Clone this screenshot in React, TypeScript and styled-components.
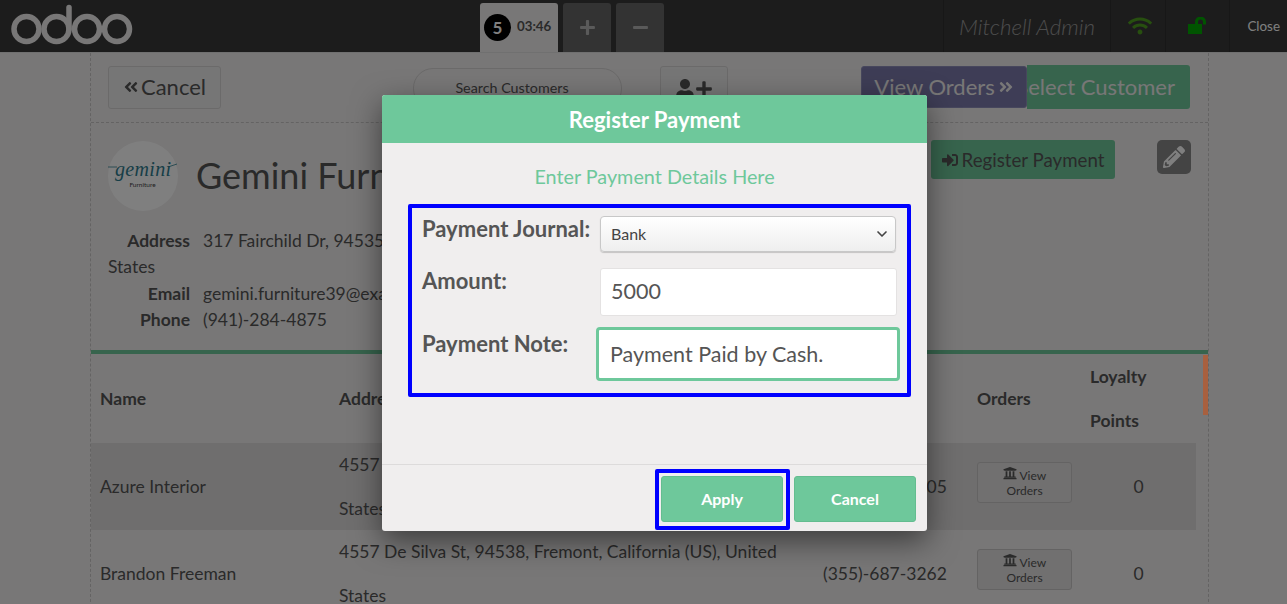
import React from "react";
import styled, { createGlobalStyle } from "styled-components";
import { FaAngleDoubleLeft, FaAngleDoubleRight, FaUser, FaSignInAlt, FaPencilAlt, FaUniversity, FaWifi, FaPlus, FaMinus } from "react-icons/fa";
import { ChevronDown } from "lucide-react";

const Global = createGlobalStyle`
  html, body { margin: 0; padding: 0; height: 604px; overflow: hidden; background: #f0eeee; }
  body { font-family: Lato, "Open Sans", sans-serif; color: #555; }
  * { box-sizing: border-box; }
`;

const Page = styled.div`
  position: relative;
  width: 1287px;
  height: 604px;
  overflow: hidden;
`;

const Header = styled.header`
  display: flex;
  height: 53px;
  background: #393939;
  border-bottom: 1px solid #e0e0e0;
`;

const Logo = styled.svg`
  width: 143px;
  height: 52px;
  flex: none;
`;

const Tabs = styled.div`
  display: flex;
  align-items: flex-end;
  gap: 5px;
  margin-left: 337px;
  height: 52px;
`;

const OrderTab = styled.div`
  display: flex;
  align-items: center;
  width: 78px;
  height: 49px;
  padding-left: 4px;
  gap: 6px;
  background: #f0eeee;
  border-radius: 3px 3px 0 0;
`;

const Time = styled.span`
  margin-bottom: 4px;
  font-size: 13.3px;
  font-weight: 700;
  color: #555;
`;

const Count = styled.span`
  display: flex;
  align-items: center;
  justify-content: center;
  width: 27px;
  height: 27px;
  margin-top: -1px;
  border-radius: 50%;
  background: #000;
  color: #fff;
  font-size: 17px;
  font-weight: 700;
`;

const TabButton = styled.div`
  display: flex;
  align-items: center;
  justify-content: center;
  width: 48px;
  height: 49px;
  background: #666;
  border-radius: 3px 3px 0 0;
  color: #b4b4b4;
  font-size: 17px;
`;

const Status = styled.div`
  display: flex;
  margin-left: auto;
  height: 52px;
`;

const StatusCell = styled.div<{ $w: number }>`
  display: flex;
  align-items: center;
  justify-content: center;
  width: ${(p) => p.$w}px;
  border-left: 1px solid #2f2f2f;
`;

const User = styled(StatusCell)`
  font-size: 22.4px;
  font-style: italic;
  font-weight: 300;
  color: #999;
`;

const WifiCell = styled(StatusCell)`
  padding: 0 0 0 3px;
`;

const LockIcon = styled.svg`
  width: 20px;
  height: 17px;
  margin: 0 0 1px 0;
`;

const Close = styled(StatusCell)`
  font-size: 13.4px;
  color: #fff;
  justify-content: flex-end;
  padding-right: 7px;
`;

const Screen = styled.main`
  position: relative;
  width: 1119px;
  margin-left: 90px;
  border-left: 1px dashed #c9c7c7;
  border-right: 1px dashed #c9c7c7;
`;

const TopBar = styled.div`
  display: flex;
  align-items: flex-start;
  height: 70px;
  padding: 13px 0 0 17px;
  border-bottom: 1px dashed #c9c7c7;
`;

const GhostButton = styled.div`
  display: flex;
  align-items: center;
  justify-content: center;
  gap: 2px;
  height: 43px;
  padding-bottom: 2px;
  background: #ececec;
  border: 1px solid #d6d4d4;
  border-radius: 3px;
  font-size: 22px;
  color: #555;
`;

const CancelBack = styled(GhostButton)`
  width: 113px;
`;

const Search = styled.div`
  width: 209px;
  height: 41px;
  margin: 2px 0 0 192px;
  padding: 10px 11px 0 0;
  text-align: center;
  font-size: 14.3px;
  color: #555;
  background: #f0eeee;
  border: 1px solid #d6d4d4;
  border-radius: 20px;
`;

const AddButton = styled(GhostButton)`
  width: 68px;
  margin-left: 38px;
  gap: 0;
  padding-top: 4px;
`;

const ActionGroup = styled.div`
  display: flex;
  width: 329px;
  margin: -1px 0 0 133px;
  align-items: flex-start;
`;

const SelectCustomer = styled.div`
  display: flex;
  justify-content: flex-end;
  flex: none;
  width: 163px;
  height: 44px;
  padding-right: 15px;
  overflow: hidden;
  background: #6ec89b;
  border-radius: 0 3px 3px 0;
  font-size: 22px;
  line-height: 43px;
  white-space: nowrap;
  color: #f0eeee;
`;

const ViewOrders = styled.div`
  display: flex;
  align-items: center;
  justify-content: center;
  flex: none;
  gap: 3px;
  width: 166px;
  height: 42px;
  margin-top: 1px;
  padding-bottom: 1px;
  background: #7c7bad;
  border: 1px solid #8f8eba;
  border-radius: 3px;
  font-size: 22px;
  color: #f0eeee;
`;

const Details = styled.section`
  height: 227px;
  padding: 18px 17px 0;
`;

const DetailsTop = styled.div`
  display: flex;
  align-items: flex-start;
`;

const Avatar = styled.svg`
  width: 70px;
  height: 70px;
  flex: none;
`;

const Name = styled.h1`
  margin: 0 0 0 18px;
  font-size: 36px;
  font-weight: 400;
  line-height: 69px;
  color: #555;
  width: 735px;
  flex: none;
  white-space: nowrap;
`;

const RegisterButton = styled.div`
  display: flex;
  align-items: center;
  justify-content: center;
  gap: 4px;
  width: 184px;
  height: 39px;
  margin-top: -1px;
  padding-top: 1px;
  background: #6ec89b;
  border-radius: 3px;
  font-size: 18.7px;
  color: #555;
`;

const EditButton = styled.div`
  display: flex;
  align-items: center;
  justify-content: center;
  width: 34px;
  height: 34px;
  margin: -1px 0 0 42px;
  background: #888;
  border-radius: 5px;
  color: #fff;
  font-size: 22px;
`;

const Info = styled.div`
  width: 565px;
  margin-top: 17px;
  font-size: 17.5px;
  line-height: 26.4px;
  color: #555;
`;

const InfoLabel = styled.b`
  display: inline-block;
  width: 82px;
  margin-right: 13px;
  text-align: right;
  font-weight: 700;
`;

const TableWrap = styled.div`
  border-top: 4px solid #6ec89b;
`;

const Thumb = styled.div`
  position: absolute;
  z-index: 2;
  right: 79px;
  top: 355px;
  width: 5px;
  height: 60px;
  background: #a8603f;
`;

const Table = styled.table`
  width: 1105px;
  table-layout: fixed;
  border-collapse: collapse;
  font-size: 17.5px;
  line-height: 43.5px;
  color: #555;
`;

const Th = styled.th`
  padding: 1px 9px 0;
  height: 89px;
  line-height: 44px;
  text-align: left;
  font-weight: 700;
`;

const Row = styled.tr<{ $shaded?: boolean }>`
  height: 87px;
  background: ${(p) => (p.$shaded ? "#dedcdc" : "transparent")};
`;

const Td = styled.td<{ $center?: boolean }>`
  padding: 0 9px;
  text-align: ${(p) => (p.$center ? "center" : "left")};
`;

const OrdersButton = styled.div`
  width: 95px;
  height: 41px;
  margin-bottom: 8px;
  padding-top: 3px;
  border: 1px solid #c9c7c7;
  border-radius: 3px;
  background: #e2e0e0;
  text-align: center;
  font-size: 12px;
  line-height: 15px;
`;

const Overlay = styled.div`
  position: absolute;
  inset: 0;
  background: rgba(0, 0, 0, 0.5);
`;

const Modal = styled.div`
  position: absolute;
  left: 382px;
  top: 95px;
  width: 545px;
  height: 436px;
  display: flex;
  flex-direction: column;
  background: #f0eeee;
  border-radius: 3px;
  box-shadow: 0 10px 30px rgba(0, 0, 0, 0.5);
  overflow: hidden;
`;

const ModalTitle = styled.div`
  height: 48px;
  flex: none;
  padding-top: 1px;
  background: #6ec89b;
  color: #fff;
  font-size: 22px;
  font-weight: 700;
  line-height: 47px;
  text-align: center;
`;

const ModalBody = styled.div`
  flex: 1;
  padding: 20px 16px 0 26px;
`;

const Lead = styled.div`
  height: 41px;
  margin: 0 -16px 0 -26px;
  font-size: 19.8px;
  line-height: 26px;
  text-align: center;
  color: #6ec89b;
`;

const HighlightBox = styled.div`
  width: 503px;
  height: 193px;
  padding: 8px 0 0 10px;
  border: 4px solid #0000ff;
  border-radius: 2px;
`;

const FormRow = styled.div<{ $gap: number }>`
  display: flex;
  align-items: flex-start;
  margin-bottom: ${(p) => p.$gap}px;
`;

const Label = styled.label<{ $top?: number }>`
  width: 178px;
  flex: none;
  padding-top: ${(p) => p.$top ?? 0}px;
  font-size: 22px;
  font-weight: 700;
  line-height: 25px;
  color: #555;
  white-space: nowrap;
`;

const SelectWrap = styled.div`
  position: relative;
  width: 296px;
  height: 36px;
`;

const Select = styled.select`
  appearance: none;
  width: 100%;
  height: 100%;
  padding: 0 0 2px 10px;
  font-family: Lato, sans-serif;
  font-size: 16px;
  color: #444;
  background: linear-gradient(#ffffff, #eeeeee);
  border: 1px solid #c8c8c8;
  border-radius: 4px;
  box-shadow: 0 1px 1px rgba(0, 0, 0, 0.18);
`;

const Caret = styled.span`
  position: absolute;
  right: 6px;
  top: 10px;
  display: flex;
  pointer-events: none;
  color: #444;
`;

const TextInput = styled.input<{ $active?: boolean }>`
  height: ${(p) => (p.$active ? 54 : 48)}px;
  width: ${(p) => (p.$active ? 304 : 297)}px;
  margin-left: ${(p) => (p.$active ? -4 : 0)}px;
  padding: 0 0 ${(p) => (p.$active ? 0 : 2)}px ${(p) => (p.$active ? 11 : 10)}px;
  font-family: Lato, sans-serif;
  font-size: 21.5px;
  color: #555;
  background: #fff;
  border: ${(p) => (p.$active ? "3px solid #6ec89b" : "1px solid #e4e2e2")};
  border-radius: ${(p) => (p.$active ? 4 : 3)}px;
  outline: none;
`;

const Footer = styled.div`
  display: flex;
  justify-content: flex-end;
  align-items: flex-start;
  flex: none;
  height: 67px;
  padding: 4px 11px 0 0;
  border-top: 1px solid #dddbdb;
`;

const ApplyFrame = styled.div`
  padding: 3px 3px 4px 2px;
  margin-right: 4px;
  border: 4px solid #0000ff;
  border-radius: 2px;
`;

const ModalButton = styled.div<{ $plain?: boolean }>`
  width: 122px;
  height: 46px;
  margin-top: ${(p) => (p.$plain ? 7 : 0)}px;
  background: #6ec89b;
  border: 1px solid #64bd90;
  border-radius: 3px;
  color: #fff;
  font-size: 16px;
  font-weight: 700;
  line-height: 44px;
  text-align: center;
`;

const customers = [
  { name: "Azure Interior", address: "4557 De Silva St, 94538, Fremont, California (US), United States", phone: "(870)-931-0505", shaded: true },
  { name: "Brandon Freeman", address: "4557 De Silva St, 94538, Fremont, California (US), United States", phone: "(355)-687-3262", shaded: false },
];

export default function App() {
  return (
    <Page>
      <Global />
      <Header>
        <Logo viewBox="0 0 143 52">
          <g fill="none" stroke="#f0eeee" strokeWidth="5.5">
            <circle cx="26.5" cy="29" r="12.5" />
            <circle cx="56.5" cy="29" r="12.5" />
            <path d="M69 29V7.5" strokeLinecap="round" />
            <circle cx="87" cy="29" r="12.5" />
            <circle cx="117" cy="29" r="12.5" />
          </g>
        </Logo>
        <Tabs>
          <OrderTab>
            <Count>5</Count>
            <Time>03:46</Time>
          </OrderTab>
          <TabButton><FaPlus /></TabButton>
          <TabButton><FaMinus /></TabButton>
        </Tabs>
        <Status>
          <User $w={167}>Mitchell Admin</User>
          <WifiCell $w={55}><FaWifi color="#4f9f1f" size={24} /></WifiCell>
          <StatusCell $w={64}>
            <LockIcon viewBox="0 0 20 17">
              <rect x="0" y="7" width="14" height="10" fill="#00a800" />
              <path d="M8.5 8V5a4 4 0 0 1 8 0v2.5" fill="none" stroke="#00a800" strokeWidth="3" />
            </LockIcon>
          </StatusCell>
          <Close $w={58}>Close</Close>
        </Status>
      </Header>
      <Screen>
        <TopBar>
          <CancelBack><FaAngleDoubleLeft size={16} />Cancel</CancelBack>
          <Search>Search Customers</Search>
          <AddButton><FaUser size={20} /><FaPlus size={18} /></AddButton>
          <ActionGroup>
            <ViewOrders>View Orders<FaAngleDoubleRight size={16} /></ViewOrders>
            <SelectCustomer>Select Customer</SelectCustomer>
          </ActionGroup>
        </TopBar>
        <Details>
          <DetailsTop>
            <Avatar viewBox="0 0 70 70">
              <circle cx="35" cy="35" r="35" fill="#fff" />
              <text x="7" y="35" fontFamily="'Liberation Serif', serif" fontStyle="italic" fontSize="20" fill="#2f7d8f" textLength="56">gemini</text>
              <path d="M0 26H9M60 26L69 23" stroke="#2f7d8f" strokeWidth="0.8" />
              <text x="34.5" y="46" textAnchor="middle" fontFamily="Lato, sans-serif" fontSize="6.5" fill="#444">Furniture</text>
            </Avatar>
            <Name>Gemini Furniture</Name>
            <RegisterButton><FaSignInAlt size={16} />Register Payment</RegisterButton>
            <EditButton><FaPencilAlt /></EditButton>
          </DetailsTop>
          <Info>
            <InfoLabel>Address</InfoLabel>317 Fairchild Dr, 94535, Fremont, California (US), United States
            <br />
            <InfoLabel>Email</InfoLabel>gemini.furniture39@example.com
            <br />
            <InfoLabel>Phone</InfoLabel>(941)-284-4875
          </Info>
        </Details>
        <TableWrap>
          <Table>
            <colgroup>
              <col style={{ width: 239 }} />
              <col style={{ width: 484 }} />
              <col style={{ width: 154 }} />
              <col style={{ width: 113 }} />
              <col style={{ width: 115 }} />
            </colgroup>
            <thead>
              <tr>
                <Th>Name</Th>
                <Th>Address</Th>
                <Th>Phone</Th>
                <Th>Orders</Th>
                <Th>Loyalty Points</Th>
              </tr>
            </thead>
            <tbody>
              {customers.map((c) => (
                <Row key={c.name} $shaded={c.shaded}>
                  <Td>{c.name}</Td>
                  <Td>{c.address}</Td>
                  <Td>{c.phone}</Td>
                  <Td>
                    <OrdersButton><FaUniversity size={14} /> View<br />Orders</OrdersButton>
                  </Td>
                  <Td $center>0</Td>
                </Row>
              ))}
            </tbody>
          </Table>
        </TableWrap>
      </Screen>
      <Overlay />
      <Thumb />
      <Modal>
        <ModalTitle>Register Payment</ModalTitle>
        <ModalBody>
          <Lead>Enter Payment Details Here</Lead>
          <HighlightBox>
            <FormRow $gap={16}>
              <Label>Payment Journal:</Label>
              <SelectWrap>
                <Select defaultValue="Bank">
                  <option>Bank</option>
                  <option>Cash</option>
                </Select>
                <Caret><ChevronDown size={16} strokeWidth={2.5} /></Caret>
              </SelectWrap>
            </FormRow>
            <FormRow $gap={11}>
              <Label>Amount:</Label>
              <TextInput defaultValue="5000" />
            </FormRow>
            <FormRow $gap={0}>
              <Label $top={4}>Payment Note:</Label>
              <TextInput $active defaultValue="Payment Paid by Cash." />
            </FormRow>
          </HighlightBox>
        </ModalBody>
        <Footer>
          <ApplyFrame><ModalButton>Apply</ModalButton></ApplyFrame>
          <ModalButton $plain>Cancel</ModalButton>
        </Footer>
      </Modal>
    </Page>
  );
}
